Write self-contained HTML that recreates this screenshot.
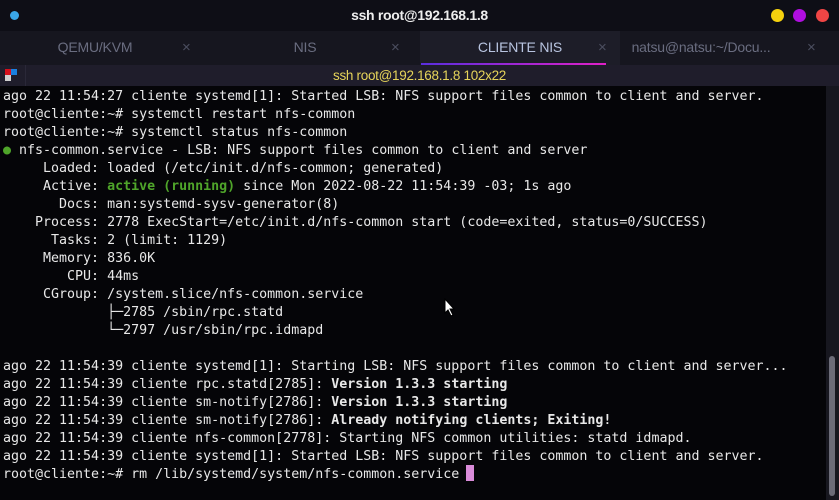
<!DOCTYPE html>
<html><head><meta charset="utf-8"><style>
*{margin:0;padding:0;box-sizing:border-box}
body{width:839px;height:500px;overflow:hidden;background:#050508;font-family:"Liberation Sans",sans-serif;position:relative}
#title{position:absolute;left:0;top:0;width:839px;height:31px;background:#0e0e16;color:#eee;font-weight:bold;font-size:14px;text-align:center;line-height:31px;letter-spacing:-0.3px}
.dot{position:absolute;top:9px;width:13px;height:13px;border-radius:50%}
#tabs{position:absolute;left:0;top:31px;width:839px;height:34px;background:#16161f}
.tab{position:absolute;top:0;height:34px;line-height:33px;font-size:14px;color:#6a6d80;text-align:center;letter-spacing:-0.2px}
.x{position:absolute;top:0;color:#4c4f60;font-size:15px;line-height:33px}
#status{position:absolute;left:0;top:65px;width:839px;height:21px;background:#1f1d2b;color:#e6d45a;font-size:13.5px;text-align:center;line-height:21px;letter-spacing:-0.3px}
#term{position:absolute;left:3px;top:88px;font-family:"DejaVu Sans Mono",monospace;font-size:13.3px;line-height:18px;color:#e8e8e8;white-space:pre}
b{font-weight:bold}
.g{color:#4fa52a;font-weight:bold}
#sb{position:absolute;left:826px;top:86px;width:13px;height:414px;background:#17171f}
#th{position:absolute;left:829px;top:356px;width:6px;height:140px;border-radius:3px;background:#6c6c78}
#cur{position:absolute;left:466px;top:465px;width:8px;height:16px;background:#d98bd9}
</style></head><body>
<div id="title">ssh root@192.168.1.8
<div class="dot" style="left:10px;top:11px;width:9px;height:9px;background:#3aa6e8"></div>
<div class="dot" style="left:771px;background:#f5d10e"></div>
<div class="dot" style="left:793px;background:#b00ee0"></div>
<div class="dot" style="left:816px;background:#f04545"></div>
</div>
<div id="tabs">
<div class="tab" style="left:0;width:190px">QEMU/KVM</div><div class="x" style="left:182px">×</div>
<div class="tab" style="left:210px;width:190px">NIS</div><div class="x" style="left:391px">×</div>
<div class="tab" style="left:420px;width:200px;background:#1d1d28;color:#b8c4e0">CLIENTE NIS<div style="position:absolute;left:1px;right:14px;bottom:0;height:2px;background:linear-gradient(90deg,#5a2ee0,#e020c8)"></div></div><div class="x" style="left:598px">×</div>
<div class="tab" style="left:626px;width:150px">natsu@natsu:~/Docu...</div><div class="x" style="left:807px">×</div>
</div>
<div id="status">ssh root@192.168.1.8 102x22
<div style="position:absolute;left:5px;top:4px;width:6px;height:6px;background:#d4101c"></div>
<div style="position:absolute;left:11px;top:4px;width:6px;height:6px;background:#1a80e0"></div>
<div style="position:absolute;left:5px;top:10px;width:6px;height:6px;background:#d0d0d0"></div>
<div style="position:absolute;left:25px;top:0;width:1px;height:21px;background:#2a2838"></div>
</div>
<div id="term">ago 22 11:54:27 cliente systemd[1]: Started LSB: NFS support files common to client and server.
root@cliente:~# systemctl restart nfs-common
root@cliente:~# systemctl status nfs-common
<span style="color:#4fa52a">●</span> nfs-common.service - LSB: NFS support files common to client and server
     Loaded: loaded (/etc/init.d/nfs-common; generated)
     Active: <span class="g">active (running)</span> since Mon 2022-08-22 11:54:39 -03; 1s ago
       Docs: man:systemd-sysv-generator(8)
    Process: 2778 ExecStart=/etc/init.d/nfs-common start (code=exited, status=0/SUCCESS)
      Tasks: 2 (limit: 1129)
     Memory: 836.0K
        CPU: 44ms
     CGroup: /system.slice/nfs-common.service
             ├─2785 /sbin/rpc.statd
             └─2797 /usr/sbin/rpc.idmapd

ago 22 11:54:39 cliente systemd[1]: Starting LSB: NFS support files common to client and server...
ago 22 11:54:39 cliente rpc.statd[2785]: <b>Version 1.3.3 starting</b>
ago 22 11:54:39 cliente sm-notify[2786]: <b>Version 1.3.3 starting</b>
ago 22 11:54:39 cliente sm-notify[2786]: <b>Already notifying clients; Exiting!</b>
ago 22 11:54:39 cliente nfs-common[2778]: Starting NFS common utilities: statd idmapd.
ago 22 11:54:39 cliente systemd[1]: Started LSB: NFS support files common to client and server.
root@cliente:~# rm /lib/systemd/system/nfs-common.service </div>
<div id="cur"></div>
<div id="sb"></div><div id="th"></div>
<svg style="position:absolute;left:444px;top:298px" width="12" height="20" viewBox="0 0 12 20"><path d="M1 1 L1 15 L4 12 L7 18 L9 17 L6 11 L10 11 Z" fill="#fff" stroke="#000" stroke-width="1"/></svg>
</body></html>
